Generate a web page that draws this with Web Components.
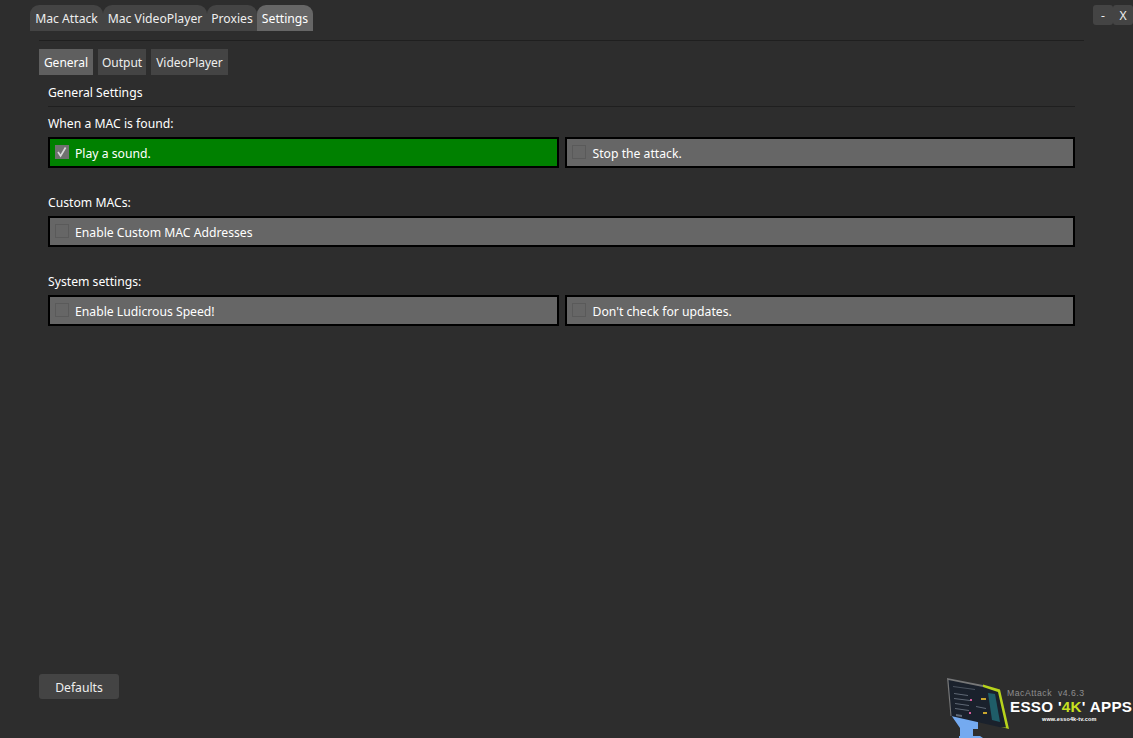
<!DOCTYPE html>
<html><head><meta charset="utf-8"><style>
html,body{margin:0;height:100%;background:#2d2d2d}
body{font:12.2px "Noto Sans","Open Sans",sans-serif;color:#fff;overflow:hidden}
</style></head><body>
<app-window></app-window>
<script>
const def=(n,css,html)=>{customElements.define(n,class extends HTMLElement{constructor(){super();this.attachShadow({mode:'open'}).innerHTML=`<style>${css}</style>${html}`}})};
def('main-tab',`:host{display:block;height:26px;line-height:27px;text-align:center;background:#444;border-radius:9px 9px 0 0;color:#eee;white-space:nowrap}:host([active]){background:#666;color:#fff}`,`<slot></slot>`);
def('sub-tab',`:host{display:block;height:26px;line-height:28px;text-align:center;background:#444;color:#eee;font-size:12px}:host([active]){background:#5f5f5f;color:#fff}`,`<slot></slot>`);
def('win-btn',`:host{display:flex;align-items:center;justify-content:center;width:20px;height:20px;background:#444;border-radius:3px;color:#eee}`,`<slot></slot>`);
def('check-row',`:host{flex:1 1 0;display:flex;align-items:center;gap:6px;box-sizing:border-box;height:31px;padding:0 5px;border:2px solid #000;background:#666;color:#fff;min-width:0}
:host([on]){background:#008000}
:host([right]) .x{margin-left:1px}
.x{margin-top:2px}
.b{width:14px;height:14px;box-sizing:border-box;border:1px solid #5a5a5a;background:#666;flex:none;display:block;position:relative;top:-1px}
:host([on]) .b{background:#707070;border-color:#707070}
svg{display:none;width:12px;height:12px}:host([on]) svg{display:block}`,`<span class="b"><svg viewBox="0 0 12 12"><path d="M2 6 4.600 10 9.600 1.500" fill="none" stroke="#d8d8d8" stroke-width="1.700"/></svg></span><span class="x"><slot></slot></span>`);
def('setting-group',`:host{display:block}.t{height:20px;line-height:22px;margin-bottom:4px}.r{display:flex;gap:6px}`,`<div class="t"><slot name="title"></slot></div><div class="r"><slot></slot></div>`);
def('esso-logo',`:host{position:absolute;right:0;bottom:0;width:190px;height:62px;display:block}
svg{position:absolute;left:3px;top:0;width:68px;height:62px;filter:blur(.4px)}
span{position:absolute;white-space:nowrap;font-family:"Liberation Sans",sans-serif;line-height:normal}
.v{left:64px;top:12px;font-size:8.700px;color:#8d8d8d;letter-spacing:.5px}
.m{left:67px;top:22px;font-weight:bold;font-size:15.200px;letter-spacing:.300px}
.m b{color:#c8e020}
.u{left:99px;top:40px;font-weight:bold;font-size:5.500px;letter-spacing:.15px}`,
`<svg viewBox="0 0 68 62"><path d="M5 39 14 52V60H13V62H37L34 60H27V53H32V44Z" fill="#74aaf0"/><path d="M1 2 37 9 53 14 62 53 5 40Z" fill="#1a212c"/><path d="M1 2 37 9 37 11 2.500 4 5.500 40 4.500 40Z" fill="#777"/><path d="M37 8.500 54 13.500 63 53 55 51 60 51.500 52 16 37 11Z" fill="#b7d31c"/><path d="M42 17 49 18 54 46 46 44Z" fill="#1f5d68"/><g fill="#5f6875"><path d="M7 10l22 3v1L7 11z" opacity=".7"/><path d="M8 17l14 2v1L8 18z"/><path d="M8 22l16 2v1L8 23z"/><path d="M9 27l14 2v1L9 28z"/><path d="M9 32l14 2v1L9 33z"/><path d="M10 38l6 1v2l-6-1z"/><path d="M30 30l10 2v1l-10-2z"/></g><g fill="#d65c9c"><rect x="24" y="23" width="2" height="2"/><rect x="23" y="36" width="2" height="2"/></g><g fill="#c9a62e"><rect x="35" y="22" width="5" height="2"/><rect x="37" y="36" width="4" height="2"/></g></svg>
<span class="v">MacAttack&nbsp; v4.6.3</span><span class="m">ESSO '<b>4K</b>' APPS</span><span class="u">www.esso4k-tv.com</span>`);
def('app-window',`:host{display:flex;flex-direction:column;position:relative;height:738px;box-sizing:border-box;padding:5px 0 39px}
.top{display:flex;justify-content:space-between}
.tabs{display:flex;padding-left:30px}
.wb{display:flex}
.rule{height:1px;background:#1f1f1f;margin:9px 49px 8px 39px}
.sub{display:flex;gap:5px;padding-left:39px}
.page{padding:7px 58px 0 48px;flex:1}
.h{height:24px;line-height:22px;border-bottom:1px solid #1f1f1f;margin-bottom:6px}
setting-group{margin-bottom:24px}
.foot{padding-left:39px}
.d{width:80px;height:25px;line-height:27px;text-align:center;background:#444;border-radius:3px;color:#eee}`,
`<div class="top"><div class="tabs"><main-tab style="width:73px">Mac Attack</main-tab><main-tab style="width:104px">Mac VideoPlayer</main-tab><main-tab style="width:50px">Proxies</main-tab><main-tab active style="width:56px">Settings</main-tab></div><div class="wb"><win-btn>-</win-btn><win-btn>X</win-btn></div></div>
<div class="rule"></div>
<div class="sub"><sub-tab active style="width:54px">General</sub-tab><sub-tab style="width:48px">Output</sub-tab><sub-tab style="width:77px">VideoPlayer</sub-tab></div>
<div class="page"><div class="h">General Settings</div>
<setting-group><span slot="title">When a MAC is found:</span><check-row on>Play a sound.</check-row><check-row right>Stop the attack.</check-row></setting-group>
<setting-group><span slot="title">Custom MACs:</span><check-row>Enable Custom MAC Addresses</check-row></setting-group>
<setting-group><span slot="title">System settings:</span><check-row>Enable Ludicrous Speed!</check-row><check-row right>Don't check for updates.</check-row></setting-group></div>
<div class="foot"><div class="d">Defaults</div></div><esso-logo></esso-logo>`);
</script></body></html>
